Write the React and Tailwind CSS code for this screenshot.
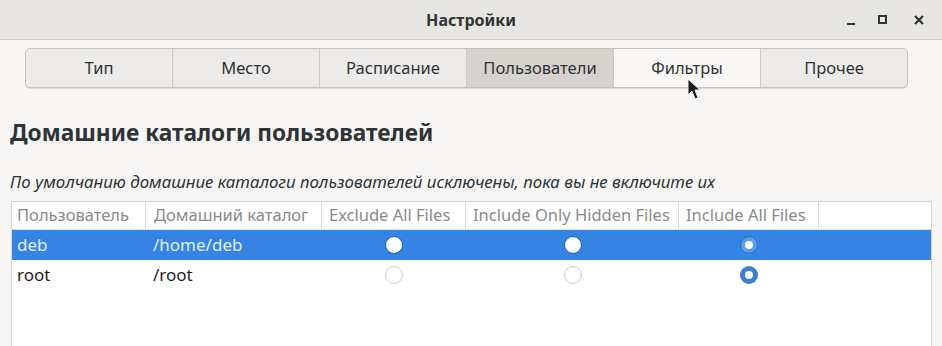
import React from 'react';

const tabs = ['Тип', 'Место', 'Расписание', 'Пользователи', 'Фильтры', 'Прочее'];

const rows = [
    { user: 'deb', home: '/home/deb', choice: 2, selected: true },
    { user: 'root', home: '/root', choice: 2, selected: false },
];

const Radio = ({ checked, selected }) => {
    if (checked) {
        return (
            <span className={`inline-flex w-[18px] h-[18px] rounded-full items-center justify-center ${selected ? 'bg-[#5c9de8] border border-[#2a6cc0]' : 'bg-[#3a7fd6]'}`}>
                <span className="w-[8px] h-[8px] rounded-full bg-white"></span>
            </span>
        );
    }
    return (
        <span className={`inline-block w-[18px] h-[18px] rounded-full ${selected ? 'bg-white border border-[#1d5aa6]' : 'bg-white border border-[#cfcdca]'}`}></span>
    );
};

const App = () => {
    return (
        <div className="w-[942px] h-[346px] bg-[#f6f5f4] overflow-hidden relative" style={{ fontFamily: '"Noto Sans", "Open Sans", sans-serif' }}>
            {/* title bar */}
            <div className="h-[40px] bg-[#e8e6e3] border-b border-[#cdc9c5] flex items-center relative">
                <div className="flex-1 text-center text-[16px] font-bold text-[#2e3436]">Настройки</div>
                <div className="absolute right-0 top-0 h-full flex items-center">
                    <span className="w-[8px] h-[2px] bg-[#2e3436] mt-[8px] mr-[23px]"></span>
                    <span className="w-[9px] h-[9px] border-2 border-[#2e3436] mr-[26px]"></span>
                    <svg width="12" height="12" viewBox="0 0 12 12" className="mr-[17px]">
                        <path d="M2 2 L10 10 M10 2 L2 10" stroke="#2e3436" strokeWidth="2.2" />
                    </svg>
                </div>
            </div>

            {/* tab buttons */}
            <div className="pl-[25px] pr-[34px] pt-[8px]">
                <div className="flex h-[40px] rounded-[5px] border border-[#c6c2bd] bg-[#edebe9] shadow-[0_1px_0_#dedbd8] overflow-hidden">
                    {tabs.map((t, i) => (
                        <div
                            key={t}
                            className={`flex-1 flex items-center justify-center text-[16.5px] text-[#2e3436] ${i > 0 ? 'border-l border-[#cdc9c5]' : ''} ${i === 3 ? 'bg-[#d6d3cf]' : i === 4 ? 'bg-[#f8f7f6]' : ''}`}
                        >
                            {t}
                        </div>
                    ))}
                </div>
            </div>

            <h2 className="px-[10px] mt-[31px] text-[22.7px] font-bold text-[#2e3436] leading-[28px]">Домашние каталоги пользователей</h2>
            <p className="px-[10px] mt-[25px] text-[16.85px] italic text-[#2e3436] leading-[20px]">По умолчанию домашние каталоги пользователей исключены, пока вы не включите их</p>

            {/* table */}
            <div className="ml-[11px] mr-[10px] mt-[9px] h-[200px] bg-white border border-[#d6d3cf]">
                <div className="flex h-[28px] text-[16.5px] text-[#888b8c] border-b border-[#e4e2df]">
                    <div className="w-[134px] pl-[5px] flex items-center border-r border-[#dcdad6] whitespace-nowrap overflow-hidden">Пользователь</div>
                    <div className="w-[176px] pl-[8px] flex items-center border-r border-[#dcdad6] whitespace-nowrap overflow-hidden">Домашний каталог</div>
                    <div className="w-[144px] pl-[7px] flex items-center border-r border-[#dcdad6] whitespace-nowrap overflow-hidden">Exclude All Files</div>
                    <div className="w-[213px] pl-[7px] flex items-center border-r border-[#dcdad6] whitespace-nowrap overflow-hidden">Include Only Hidden Files</div>
                    <div className="w-[140px] pl-[7px] flex items-center border-r border-[#dcdad6] whitespace-nowrap overflow-hidden">Include All Files</div>
                    <div className="flex-1"></div>
                </div>
                {rows.map(r => (
                    <div key={r.user} className={`flex h-[30px] text-[17px] items-center ${r.selected ? 'bg-[#3584e4] text-[#e3efff]' : 'text-[#1d1d1d]'}`}>
                        <div className="w-[134px] pl-[5px]">{r.user}</div>
                        <div className="w-[176px] pl-[7px]">{r.home}</div>
                        <div className="w-[144px] flex justify-center"><Radio checked={r.choice === 0} selected={r.selected} /></div>
                        <div className="w-[213px] flex justify-center"><Radio checked={r.choice === 1} selected={r.selected} /></div>
                        <div className="w-[140px] flex justify-center"><Radio checked={r.choice === 2} selected={r.selected} /></div>
                        <div className="flex-1"></div>
                    </div>
                ))}
            </div>

            {/* mouse pointer */}
            <svg className="absolute left-[687px] top-[78px]" width="16" height="24" viewBox="0 0 16 24">
                <path d="M1 1 L1 17 L5 13 L8 21 L11 20 L8 12 L13 12 Z" fill="#1a1a1a" stroke="#f0f0f0" strokeWidth="1" />
            </svg>
        </div>
    );
};

export default App;
